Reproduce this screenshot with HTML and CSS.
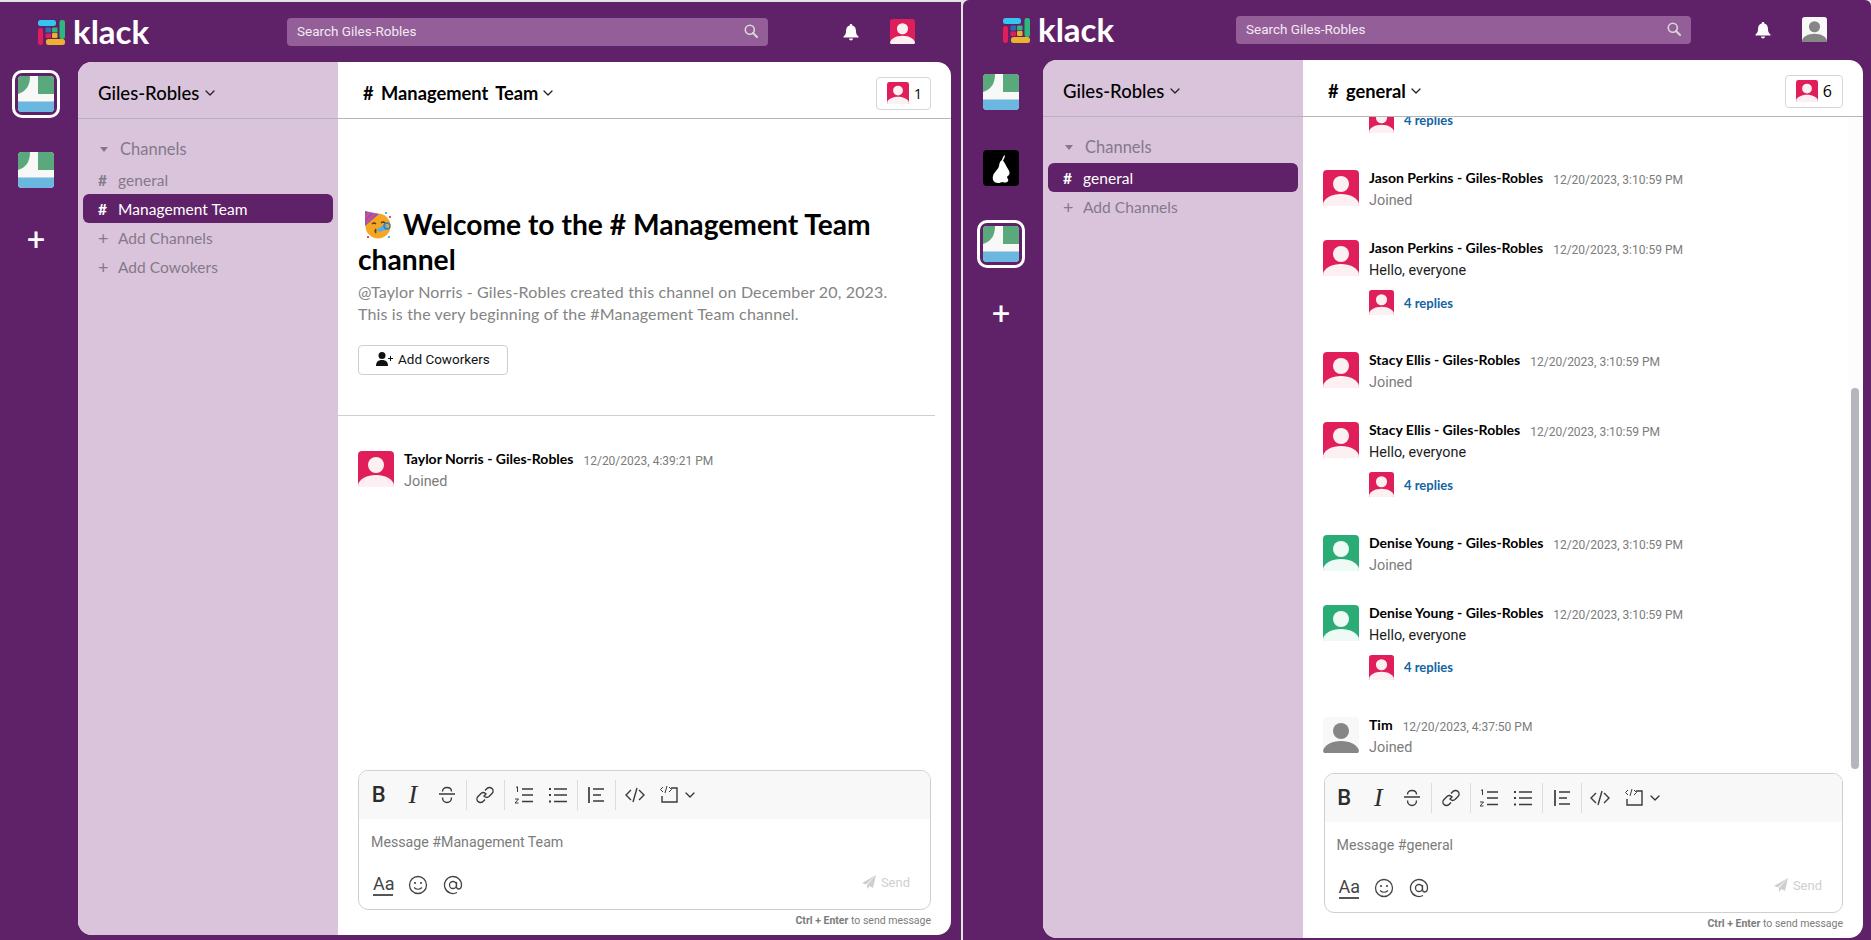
FILE: index.html
```html
<!DOCTYPE html>
<html lang="en">
<head>
    <meta charset="UTF-8">
    <meta name="viewport" content="width=device-width, initial-scale=1.0">
    <title>Klack</title>
    <link rel="stylesheet" href="styles.css">
</head>
<body>
    <!-- shared icons -->
    <svg class="icon-defs" width="0" height="0">
        <symbol id="i-avatar" viewBox="0 0 36 36">
            <path d="M0 4a4 4 0 0 1 4-4h28a4 4 0 0 1 4 4v29l-1 3H1l-1-3z" fill="currentColor"/>
            <circle class="av-fg" cx="18" cy="14" r="8"/>
            <path class="av-fg" d="M0 34C1 28 9 24 18 24s17 4 18 10l-1 2H1z"/>
        </symbol>
        <symbol id="i-workspace" viewBox="0 0 36 36">
            <rect width="36" height="36" rx="4" fill="#f8f8f6"/>
            <path d="M0 4a4 4 0 0 1 4-4h8c0 9-3 15-12 18z" fill="#5aa97c"/>
            <path d="M20 0h12a4 4 0 0 1 4 4v14H20z" fill="#5aa97c"/>
            <path d="M0 26h36v6a4 4 0 0 1-4 4H4a4 4 0 0 1-4-4z" fill="#6bb7df"/>
            <path d="M0 25.5h36" stroke="#b5d3e6" stroke-width="1"/>
        </symbol>
        <symbol id="i-logo" viewBox="0 0 27 25">
            <rect x="0" y="0" width="18" height="6" rx="2.5" fill="#36c5f0"/>
            <rect x="0" y="8" width="5" height="17" rx="2.2" fill="#e01e5a"/>
            <rect x="21.500" y="0" width="5.500" height="19" rx="2.2" fill="#2eb67d"/>
            <rect x="8" y="19" width="19" height="6" rx="2.5" fill="#ecb22e"/>
            <rect x="7.500" y="7.500" width="5.500" height="5" rx="1" fill="#2a6fb0"/>
            <rect x="14" y="7.500" width="5.500" height="5" rx="1" fill="#2eb67d"/>
            <rect x="7.500" y="13.500" width="5.500" height="4.500" rx="1" fill="#e01e5a"/>
            <rect x="14" y="13" width="5.500" height="5" rx="1" fill="#ecb22e"/>
        </symbol>
        <symbol id="i-bell" viewBox="0 0 16 18">
            <path d="M8 1a1.300 1.300 0 0 1 1.300 1.400C12 3.100 13 5.400 13 8c0 3 .8 4 2.500 5.500v1H.5v-1C2.200 12 3 11 3 8c0-2.600 1-4.900 3.700-5.600A1.300 1.300 0 0 1 8 1z" fill="#fff"/>
            <path d="M6 15.500h4a2 2 0 0 1-4 0z" fill="#fff"/>
        </symbol>
        <symbol id="i-search" viewBox="0 0 14 14">
            <circle cx="5.800" cy="5.800" r="4.500" fill="none" stroke="currentColor" stroke-width="1.600"/>
            <path d="M9 9l4 4" stroke="currentColor" stroke-width="2" stroke-linecap="round"/>
        </symbol>
        <symbol id="i-chev" viewBox="0 0 10 6">
            <path d="M1 1l4 4 4-4" fill="none" stroke="currentColor" stroke-width="1.300" stroke-linecap="round" stroke-linejoin="round"/>
        </symbol>
        <symbol id="i-strike" viewBox="0 0 20 20">
            <path d="M2 9h16M14.500 6.500C14.500 4 12.500 2.500 10 2.500S5.500 4 5.500 6.500M5.500 12.500c0 3 2 5 4.500 5s4.500-2 4.500-5" fill="none" stroke="#3a3a3a" stroke-width="1.400"/>
        </symbol>
        <symbol id="i-link" viewBox="0 0 20 20">
            <path d="M8.500 11.500l3-3M10 5.500l2-2a3.500 3.500 0 0 1 5 5l-3 3a3.500 3.500 0 0 1-4.500 0M10 14.500l-2 2a3.500 3.500 0 0 1-5-5l3-3a3.500 3.500 0 0 1 4.500 0" fill="none" stroke="#3a3a3a" stroke-width="1.400"/>
        </symbol>
        <symbol id="i-ol" viewBox="0 0 20 20">
            <path d="M8 4h11M8 10h11M8 16.500h11" stroke="#3a3a3a" stroke-width="1.500"/>
            <path d="M2 2.500l1.500-.8V7M1 14h3.500L1 18h3.500" fill="none" stroke="#3a3a3a" stroke-width="1"/>
        </symbol>
        <symbol id="i-ul" viewBox="0 0 20 20">
            <path d="M6 4h13M6 10h13M6 16.500h13" stroke="#3a3a3a" stroke-width="1.500"/>
            <path d="M1 4h2M1 10h2M1 16.500h2" stroke="#3a3a3a" stroke-width="1.800"/>
        </symbol>
        <symbol id="i-quote" viewBox="0 0 20 20">
            <path d="M3 2v16" stroke="#3a3a3a" stroke-width="1.700"/>
            <path d="M7 4h11M7 10h8M7 16h11" stroke="#3a3a3a" stroke-width="1.400"/>
        </symbol>
        <symbol id="i-code" viewBox="0 0 20 20">
            <path d="M6 5l-5 5 5 5M14 5l5 5-5 5M12 3L8 17" fill="none" stroke="#3a3a3a" stroke-width="1.400"/>
        </symbol>
        <symbol id="i-codeblock" viewBox="0 0 20 20">
            <path d="M12 3h6v14H3v-6" fill="none" stroke="#3a3a3a" stroke-width="1.400"/>
            <path d="M4 2L1.500 4.500 4 7M10 2l2.500 2.500L10 7M8 1L6 8" fill="none" stroke="#3a3a3a" stroke-width="1"/>
        </symbol>
        <symbol id="i-smile" viewBox="0 0 20 20">
            <circle cx="10" cy="10" r="8.500" fill="none" stroke="#444" stroke-width="1.300"/>
            <circle cx="7" cy="8" r="1.100" fill="#444"/>
            <circle cx="13" cy="8" r="1.100" fill="#444"/>
            <path d="M6 12.500q4 3.500 8 0" fill="none" stroke="#444" stroke-width="1.200"/>
        </symbol>
        <symbol id="i-at" viewBox="0 0 20 20">
            <circle cx="10" cy="10" r="3.500" fill="none" stroke="#444" stroke-width="1.300"/>
            <path d="M13.500 7v4.500q0 2.500 2.300 2.500 2.700-.4 2.700-4A8.500 8.500 0 1 0 14 17.500" fill="none" stroke="#444" stroke-width="1.300"/>
        </symbol>
        <symbol id="i-send" viewBox="0 0 14 14">
            <path d="M14 0L0 8l4 1.500zM14 0L5 10v4l2.500-3L11 13z" fill="#cfcfcf"/>
        </symbol>
    </svg>

    <!-- first window: Management Team -->
    <div class="window window-first">
        <header class="topbar">
            <div class="brand">
                <svg class="brand-logo"><use href="#i-logo"/></svg>
                <span class="brand-name">klack</span>
            </div>
            <div class="search">
                <span>Search Giles-Robles</span>
                <svg class="search-icon"><use href="#i-search"/></svg>
            </div>
            <div class="topbar-right">
                <svg class="bell"><use href="#i-bell"/></svg>
                <svg class="me av-red"><use href="#i-avatar"/></svg>
            </div>
        </header>
        <div class="workspace">
            <nav class="rail">
                <div class="team team-active"><svg class="team-img"><use href="#i-workspace"/></svg></div>
                <div class="team"><svg class="team-img"><use href="#i-workspace"/></svg></div>
                <div class="team-add">+</div>
            </nav>
            <div class="panel">
                <aside class="sidebar">
                    <div class="side-head">Giles-Robles <svg class="chev"><use href="#i-chev"/></svg></div>
                    <div class="side-list">
                        <div class="side-title"><span class="caret"></span>Channels</div>
                        <div class="side-row"><span class="side-mark">#</span>general</div>
                        <div class="side-row side-row-on"><span class="side-mark">#</span>Management Team</div>
                        <div class="side-row"><span class="side-mark side-plus">+</span>Add Channels</div>
                        <div class="side-row"><span class="side-mark side-plus">+</span>Add Cowokers</div>
                    </div>
                </aside>
                <main class="channel">
                    <div class="chan-head">
                        <div class="chan-name"># Management Team <svg class="chev"><use href="#i-chev"/></svg></div>
                        <div class="members">
                            <svg class="members-av av-red"><use href="#i-avatar"/></svg>
                            <span>1</span>
                        </div>
                    </div>
                    <div class="chan-scroll">
                        <section class="intro">
                            <h1 class="intro-title">
                                <svg class="party" viewBox="0 0 28 28">
                                    <circle cx="14" cy="15" r="12.500" fill="#f5a623"/>
                                    <path d="M1 0l14 3L1 15z" fill="#7b5cc4"/>
                                    <path d="M4 1l3 .7L1 8V4zM10 2l3 .7L2 13v-3z" fill="#e8457a"/>
                                    <path d="M8 13q2-2 4 0M17 12q2-2 4 0" fill="none" stroke="#5a3a10" stroke-width="1.300"/>
                                    <path d="M11 18q2 1 0 2q2 1 0 2" fill="none" stroke="#5a3a10" stroke-width="1.300"/>
                                    <path d="M13 18l9-5 2 5-9 3z" fill="#55acee"/>
                                    <circle cx="23" cy="15" r="3" fill="none" stroke="#2a7fc0" stroke-width="1.300"/>
                                    <rect x="21" y="1" width="2" height="2" fill="#55acee"/>
                                    <rect x="25" y="5" width="2" height="2" fill="#e8457a"/>
                                    <rect x="3" y="25" width="2" height="2" fill="#e8457a"/>
                                    <rect x="24" y="25" width="2" height="2" fill="#55acee"/>
                                </svg>Welcome to the # Management Team channel
                            </h1>
                            <p class="intro-text">@Taylor Norris - Giles-Robles created this channel on December 20, 2023.<br>This is the very beginning of the #Management Team channel.</p>
                            <button type="button" class="add-btn">
                                <svg class="add-icon" viewBox="0 0 17 14">
                                    <circle cx="6" cy="3.500" r="3.500" fill="#111"/>
                                    <path d="M0 14c0-4 2-6 6-6s6 2 6 6z" fill="#111"/>
                                    <path d="M12 6.500h5M14.500 4v5" stroke="#111" stroke-width="1"/>
                                </svg>
                                Add Coworkers
                            </button>
                        </section>
                        <div class="intro-line"></div>
                        <div class="msg-list">
                            <div class="msg">
                                <svg class="msg-av av-red"><use href="#i-avatar"/></svg>
                                <div class="msg-body">
                                    <div class="msg-top"><span class="msg-name">Taylor Norris - Giles-Robles</span><span class="msg-date">12/20/2023, 4:39:21 PM</span></div>
                                    <div class="msg-text msg-muted">Joined</div>
                                </div>
                            </div>
                        </div>
                    </div>
                    <div class="composer">
                        <div class="toolbar">
                            <div class="tool-group">
                                <span class="tool tool-bold">B</span>
                                <span class="tool tool-italic">I</span>
                                <svg class="tool"><use href="#i-strike"/></svg>
                            </div>
                            <div class="tool-group">
                                <svg class="tool"><use href="#i-link"/></svg>
                            </div>
                            <div class="tool-group">
                                <svg class="tool"><use href="#i-ol"/></svg>
                                <svg class="tool"><use href="#i-ul"/></svg>
                            </div>
                            <div class="tool-group">
                                <svg class="tool"><use href="#i-quote"/></svg>
                            </div>
                            <div class="tool-group tool-group-last">
                                <svg class="tool"><use href="#i-code"/></svg>
                                <svg class="tool"><use href="#i-codeblock"/></svg>
                                <svg class="tool-chev"><use href="#i-chev"/></svg>
                            </div>
                        </div>
                        <div class="composer-input">Message #Management Team</div>
                        <div class="composer-foot">
                            <span class="aa">Aa</span>
                            <svg class="foot-icon"><use href="#i-smile"/></svg>
                            <svg class="foot-icon"><use href="#i-at"/></svg>
                            <span class="send"><svg class="send-icon"><use href="#i-send"/></svg>Send</span>
                        </div>
                    </div>
                    <div class="composer-hint"><b>Ctrl + Enter</b> to send message</div>
                </main>
            </div>
        </div>
    </div>

    <!-- second window: general -->
    <div class="window window-second">
        <header class="topbar">
            <div class="brand">
                <svg class="brand-logo"><use href="#i-logo"/></svg>
                <span class="brand-name">klack</span>
            </div>
            <div class="search">
                <span>Search Giles-Robles</span>
                <svg class="search-icon"><use href="#i-search"/></svg>
            </div>
            <div class="topbar-right">
                <svg class="bell"><use href="#i-bell"/></svg>
                <svg class="me av-grey"><use href="#i-avatar"/></svg>
            </div>
        </header>
        <div class="workspace">
            <nav class="rail">
                <div class="team"><svg class="team-img"><use href="#i-workspace"/></svg></div>
                <div class="team">
                    <svg class="team-img" viewBox="0 0 36 36">
                        <rect width="36" height="36" rx="4" fill="#000"/>
                        <path d="M22 5c0 2-1 4-2 5.500 2 2.500 3 5.500 5 8.500 2 3 2 5 .5 6.500-1.500.5-2 2.500-.5 3.500 1 2-1 4-4 3.500-2-1.500-3 .5-6 .5-4 0-6-3-5-7 1-4 5-6 6-10 .5-3 1-5 2.500-5.500 1-1.500 1.500-4.500 3.500-5.500z" fill="#fff"/>
                    </svg>
                </div>
                <div class="team team-active"><svg class="team-img"><use href="#i-workspace"/></svg></div>
                <div class="team-add">+</div>
            </nav>
            <div class="panel">
                <aside class="sidebar">
                    <div class="side-head">Giles-Robles <svg class="chev"><use href="#i-chev"/></svg></div>
                    <div class="side-list">
                        <div class="side-title"><span class="caret"></span>Channels</div>
                        <div class="side-row side-row-on"><span class="side-mark">#</span>general</div>
                        <div class="side-row"><span class="side-mark side-plus">+</span>Add Channels</div>
                    </div>
                </aside>
                <main class="channel">
                    <div class="chan-head">
                        <div class="chan-name"># general <svg class="chev"><use href="#i-chev"/></svg></div>
                        <div class="members">
                            <svg class="members-av av-red"><use href="#i-avatar"/></svg>
                            <span>6</span>
                        </div>
                    </div>
                    <div class="chan-scroll chan-scroll-end">
                        <div class="msg-list">
                            <div class="msg-replies msg-replies-cut">
                                <svg class="reply-av av-red"><use href="#i-avatar"/></svg>
                                <span class="reply-link">4 replies</span>
                            </div>

                            <div class="msg">
                                <svg class="msg-av av-red"><use href="#i-avatar"/></svg>
                                <div class="msg-body">
                                    <div class="msg-top"><span class="msg-name">Jason Perkins - Giles-Robles</span><span class="msg-date">12/20/2023, 3:10:59 PM</span></div>
                                    <div class="msg-text msg-muted">Joined</div>
                                </div>
                            </div>
                            <div class="msg msg-thread">
                                <svg class="msg-av av-red"><use href="#i-avatar"/></svg>
                                <div class="msg-body">
                                    <div class="msg-top"><span class="msg-name">Jason Perkins - Giles-Robles</span><span class="msg-date">12/20/2023, 3:10:59 PM</span></div>
                                    <div class="msg-text">Hello, everyone</div>
                                    <div class="msg-replies">
                                        <svg class="reply-av av-red"><use href="#i-avatar"/></svg>
                                        <span class="reply-link">4 replies</span>
                                    </div>
                                </div>
                            </div>

                            <div class="msg">
                                <svg class="msg-av av-red"><use href="#i-avatar"/></svg>
                                <div class="msg-body">
                                    <div class="msg-top"><span class="msg-name">Stacy Ellis - Giles-Robles</span><span class="msg-date">12/20/2023, 3:10:59 PM</span></div>
                                    <div class="msg-text msg-muted">Joined</div>
                                </div>
                            </div>
                            <div class="msg msg-thread">
                                <svg class="msg-av av-red"><use href="#i-avatar"/></svg>
                                <div class="msg-body">
                                    <div class="msg-top"><span class="msg-name">Stacy Ellis - Giles-Robles</span><span class="msg-date">12/20/2023, 3:10:59 PM</span></div>
                                    <div class="msg-text">Hello, everyone</div>
                                    <div class="msg-replies">
                                        <svg class="reply-av av-red"><use href="#i-avatar"/></svg>
                                        <span class="reply-link">4 replies</span>
                                    </div>
                                </div>
                            </div>

                            <div class="msg">
                                <svg class="msg-av av-green"><use href="#i-avatar"/></svg>
                                <div class="msg-body">
                                    <div class="msg-top"><span class="msg-name">Denise Young - Giles-Robles</span><span class="msg-date">12/20/2023, 3:10:59 PM</span></div>
                                    <div class="msg-text msg-muted">Joined</div>
                                </div>
                            </div>
                            <div class="msg msg-thread">
                                <svg class="msg-av av-green"><use href="#i-avatar"/></svg>
                                <div class="msg-body">
                                    <div class="msg-top"><span class="msg-name">Denise Young - Giles-Robles</span><span class="msg-date">12/20/2023, 3:10:59 PM</span></div>
                                    <div class="msg-text">Hello, everyone</div>
                                    <div class="msg-replies">
                                        <svg class="reply-av av-red"><use href="#i-avatar"/></svg>
                                        <span class="reply-link">4 replies</span>
                                    </div>
                                </div>
                            </div>

                            <div class="msg msg-last">
                                <svg class="msg-av av-grey"><use href="#i-avatar"/></svg>
                                <div class="msg-body">
                                    <div class="msg-top"><span class="msg-name">Tim</span><span class="msg-date">12/20/2023, 4:37:50 PM</span></div>
                                    <div class="msg-text msg-muted">Joined</div>
                                </div>
                            </div>
                        </div>
                        <div class="scrollbar"><div class="scrollbar-thumb"></div></div>
                    </div>
                    <div class="composer">
                        <div class="toolbar">
                            <div class="tool-group">
                                <span class="tool tool-bold">B</span>
                                <span class="tool tool-italic">I</span>
                                <svg class="tool"><use href="#i-strike"/></svg>
                            </div>
                            <div class="tool-group">
                                <svg class="tool"><use href="#i-link"/></svg>
                            </div>
                            <div class="tool-group">
                                <svg class="tool"><use href="#i-ol"/></svg>
                                <svg class="tool"><use href="#i-ul"/></svg>
                            </div>
                            <div class="tool-group">
                                <svg class="tool"><use href="#i-quote"/></svg>
                            </div>
                            <div class="tool-group tool-group-last">
                                <svg class="tool"><use href="#i-code"/></svg>
                                <svg class="tool"><use href="#i-codeblock"/></svg>
                                <svg class="tool-chev"><use href="#i-chev"/></svg>
                            </div>
                        </div>
                        <div class="composer-input">Message #general</div>
                        <div class="composer-foot">
                            <span class="aa">Aa</span>
                            <svg class="foot-icon"><use href="#i-smile"/></svg>
                            <svg class="foot-icon"><use href="#i-at"/></svg>
                            <span class="send"><svg class="send-icon"><use href="#i-send"/></svg>Send</span>
                        </div>
                    </div>
                    <div class="composer-hint"><b>Ctrl + Enter</b> to send message</div>
                </main>
            </div>
        </div>
    </div>
</body>
</html>
```

FILE: styles.css
```css
* {
    box-sizing: border-box;
}

html, body {
    height: 100%;
}

body {
    margin: 0;
    display: flex;
    gap: 2px;
    overflow: hidden;
    background: #e4e4e4;
    font-family: Lato, sans-serif;
    color: #000;
}

.icon-defs {
    position: absolute;
}

.av-fg {
    fill: var(--fg);
}

.av-red {
    color: #e01e5a;
    --fg: #fdf0f3;
}

.av-green {
    color: #2bac76;
    --fg: #eefaf5;
}

.av-grey {
    color: #f8f8f8;
    --fg: #868686;
}

/* windows */
.window {
    display: flex;
    flex-direction: column;
    background: #5f2167;
}

.window-first {
    width: 961px;
    height: 938px;
    margin-top: 2px;
}

.window-second {
    width: 908px;
    height: 940px;
    border-radius: 6px 6px 0 0;
}

/* top bar */
.topbar {
    display: flex;
    align-items: center;
    height: 60px;
    flex-shrink: 0;
}

.brand {
    display: flex;
    align-items: center;
    gap: 8px;
    width: 287px;
    padding-left: 38px;
}

.window-second .brand {
    width: 273px;
    padding-left: 40px;
}

.brand-logo {
    width: 27px;
    height: 25px;
}

.brand-name {
    margin-top: -2px;
    font-size: 33px;
    font-weight: 700;
    line-height: 32px;
    color: #fff;
}

.search {
    display: flex;
    align-items: center;
    justify-content: space-between;
    flex: 1;
    height: 28px;
    padding: 0 10px 2px;
    background: #945e98;
    border-radius: 4px;
    font-family: Roboto, sans-serif;
    font-size: 13.5px;
    color: #f3e9f3;
}

.search-icon {
    width: 14px;
    height: 14px;
    color: #d8d8d8;
}

.topbar-right {
    display: flex;
    align-items: center;
    gap: 31px;
    width: 193px;
    padding-left: 75px;
}

.window-second .topbar-right {
    width: 180px;
    padding-left: 64px;
}

.bell {
    width: 16px;
    height: 18px;
}

.me {
    width: 25px;
    height: 25px;
    margin-top: -2px;
}

/* rail and panel */
.workspace {
    display: flex;
    flex: 1;
    min-height: 0;
}

.rail {
    display: flex;
    flex-direction: column;
    align-items: center;
    gap: 28px;
    width: 78px;
    flex-shrink: 0;
    padding: 8px 6px 0 0;
}

.window-second .rail {
    width: 80px;
    padding-right: 4px;
}

.team {
    display: flex;
    align-items: center;
    justify-content: center;
    width: 48px;
    height: 48px;
    border: 3px solid transparent;
    border-radius: 10px;
}

.team-active {
    border-color: #fff;
}

.team-img {
    width: 36px;
    height: 36px;
}

.team-add {
    height: 36px;
    margin-top: -1px;
    font-family: Roboto, sans-serif;
    font-size: 32px;
    line-height: 36px;
    color: #fff;
}

.panel {
    display: flex;
    flex: 1;
    min-width: 0;
    margin: 0 10px 5px 0;
    background: #fff;
    border-radius: 14px;
    overflow: hidden;
}

.window-second .panel {
    margin: 0 8px 2px 0;
}

/* sidebar */
.sidebar {
    width: 260px;
    flex-shrink: 0;
    background: #dac4db;
}

.side-head {
    display: flex;
    align-items: center;
    gap: 6px;
    height: 57px;
    padding: 6px 0 0 20px;
    border-bottom: 1px solid #b5b5b5;
    font-size: 18.5px;
    font-weight: 500;
}

.chev {
    width: 10px;
    height: 6px;
    color: #222;
}

.side-list {
    padding-top: 15px;
}

.side-title {
    display: flex;
    align-items: center;
    height: 31px;
    padding: 0 0 1px 22px;
    font-size: 16.5px;
    color: #84798a;
}

.caret {
    width: 0;
    height: 0;
    margin-right: 12px;
    border-left: 4px solid transparent;
    border-right: 4px solid transparent;
    border-top: 5px solid #84798a;
}

.side-row {
    display: flex;
    align-items: center;
    height: 29px;
    margin: 0 5px;
    padding-left: 15px;
    border-radius: 6px;
    font-size: 15.5px;
    letter-spacing: .05px;
    color: #84798a;
}

.side-row-on {
    background: #5f2167;
    color: #fff;
}

.side-mark {
    width: 20px;
    font-weight: 700;
}

.side-plus {
    font-weight: 400;
    font-size: 18px;
}

/* channel */
.channel {
    position: relative;
    display: flex;
    flex-direction: column;
    flex: 1;
    min-width: 0;
}

.chan-head {
    display: flex;
    align-items: center;
    justify-content: space-between;
    height: 57px;
    flex-shrink: 0;
    padding: 6px 20px 0 25px;
    border-bottom: 1px solid #b5b5b5;
}

.chan-name {
    display: flex;
    align-items: center;
    gap: 5px;
    font-size: 18.3px;
    font-weight: 700;
    word-spacing: 3px;
}

.members {
    display: flex;
    align-items: center;
    gap: 5px;
    height: 33px;
    padding: 0 8px 0 10px;
    border: 1px solid #d6d6d6;
    border-radius: 4px;
    font-family: "Open Sans", sans-serif;
    font-size: 14px;
}

.window-second .members {
    padding-right: 10px;
    font-size: 16px;
}

.members-av {
    width: 22px;
    height: 22px;
}

.chan-scroll {
    position: relative;
    display: flex;
    flex-direction: column;
    flex: 1;
    min-height: 0;
    overflow: hidden;
}

.chan-scroll-end {
    justify-content: flex-end;
}

/* channel intro */
.intro {
    padding: 88px 40px 40px 20px;
}

.intro-title {
    margin: 0;
    font-size: 28.2px;
    font-weight: 700;
    line-height: 35px;
}

.party {
    display: inline-block;
    width: 28px;
    height: 28px;
    margin: 0 11px 0 6px;
    vertical-align: -4px;
}

.intro-text {
    margin: 4px 0 20px;
    font-size: 16px;
    letter-spacing: .15px;
    line-height: 22px;
    color: #848484;
}

.add-btn {
    display: flex;
    align-items: center;
    gap: 5px;
    width: 150px;
    height: 30px;
    padding: 0 0 2px 17px;
    background: #fff;
    border: 1px solid #cfcfcf;
    border-radius: 4px;
    font-family: Roboto, sans-serif;
    font-size: 13.5px;
    color: #111;
}

.add-icon {
    width: 17px;
    height: 14px;
}

.intro-line {
    margin-right: 16px;
    border-top: 1px solid #cfcfcf;
}

/* messages */
.msg-list {
    padding: 35px 0 15px 20px;
}

.msg {
    display: flex;
    gap: 10px;
    margin-bottom: 29px;
}

.msg-thread {
    margin-bottom: 37.3px;
}

.msg-last {
    margin-bottom: 0;
}

.msg-av {
    width: 36px;
    height: 36px;
    flex-shrink: 0;
}

.msg-top {
    display: flex;
    align-items: flex-start;
    gap: 10px;
    height: 18px;
}

.msg-name {
    font-size: 14px;
    font-weight: 700;
    line-height: 16px;
}

.msg-date {
    margin-top: 1px;
    font-family: Roboto, sans-serif;
    font-size: 12px;
    line-height: 18px;
    color: #7c7c7c;
}

.msg-text {
    margin-top: 2px;
    font-family: Roboto, sans-serif;
    font-size: 14.4px;
    line-height: 21px;
    color: #1d1c1d;
}

.msg-muted {
    color: #7c7c7c;
}

.msg-replies {
    display: flex;
    align-items: center;
    gap: 10px;
    height: 25px;
    margin-top: 9px;
}

.msg-replies-cut {
    margin: 0 0 37.3px 46px;
}

.reply-av {
    width: 25px;
    height: 25px;
}

.reply-link {
    font-size: 13px;
    font-weight: 700;
    color: #1264a3;
}

.scrollbar {
    position: absolute;
    top: 0;
    right: 1px;
    bottom: 0;
    width: 14px;
    background: #fdfdfd;
}

.scrollbar-thumb {
    position: absolute;
    left: 3px;
    bottom: 4px;
    width: 8px;
    height: 381px;
    background: #b5b5bd;
    border-radius: 4px;
}

/* composer */
.composer {
    display: flex;
    flex-direction: column;
    height: 140px;
    flex-shrink: 0;
    margin: 0 20px;
    border: 1px solid #cfcfcf;
    border-radius: 10px;
    overflow: hidden;
}

.window-second .composer {
    margin-left: 20.5px;
}

.toolbar {
    display: flex;
    align-items: center;
    height: 48px;
    flex-shrink: 0;
    padding-left: 1px;
    background: #f8f8f8;
}

.tool-group {
    display: flex;
    align-items: center;
    gap: 14px;
    height: 30px;
    padding: 0 8.75px;
    border-right: 1px solid #dcdcdc;
}

.tool-group-last {
    border-right: 0;
}

.tool {
    display: block;
    width: 20px;
    height: 20px;
    text-align: center;
    line-height: 20px;
    color: #2d2d2d;
}

.tool-bold {
    font-family: Roboto, sans-serif;
    font-size: 22px;
    font-weight: 500;
}

.tool-italic {
    font-family: "Liberation Serif", serif;
    font-size: 26px;
    font-style: italic;
}

.tool-chev {
    width: 10px;
    height: 6px;
    margin-left: -8px;
    color: #333;
}

.composer-input {
    padding: 14px 12px 0;
    height: 46px;
    font-family: Roboto, sans-serif;
    font-size: 14.2px;
    line-height: 18px;
    color: #7c7c7c;
}

.composer-foot {
    display: flex;
    align-items: center;
    gap: 15px;
    flex: 1;
    padding: 0 20px 5px 14px;
}

.aa {
    width: 20px;
    border-bottom: 2px solid #555;
    font-family: Roboto, sans-serif;
    font-size: 18px;
    line-height: 21px;
    color: #444;
}

.foot-icon {
    width: 20px;
    height: 20px;
}

.send {
    display: flex;
    align-items: center;
    gap: 5px;
    margin: 0 0 5px auto;
    font-family: Roboto, sans-serif;
    font-size: 13px;
    color: #cfcfcf;
}

.send-icon {
    width: 14px;
    height: 14px;
}

.composer-hint {
    height: 25px;
    flex-shrink: 0;
    padding: 4px 20px 0 0;
    text-align: right;
    font-family: Roboto, sans-serif;
    font-size: 10.5px;
    line-height: 14px;
    color: #7c7c7c;
}
```
